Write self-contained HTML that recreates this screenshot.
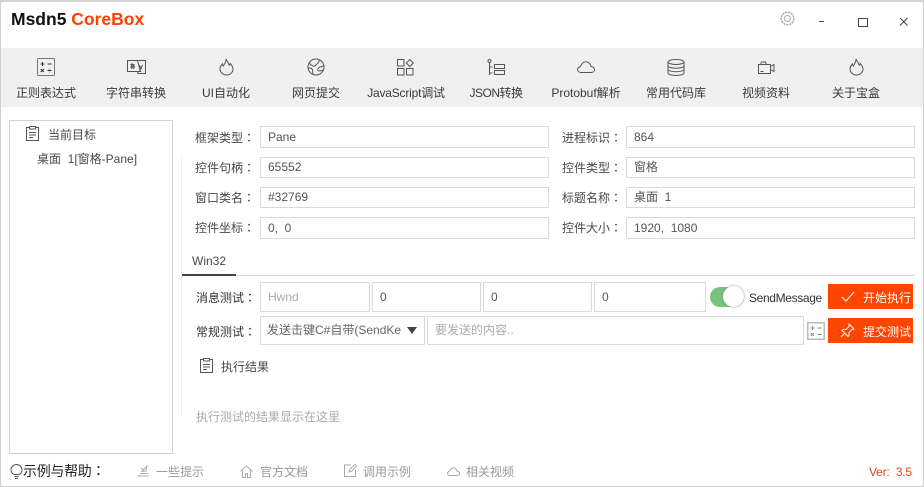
<!DOCTYPE html>
<html><head><meta charset="utf-8">
<style>
html,body{margin:0;padding:0;width:924px;height:487px;overflow:hidden;background:#fff}
body{position:relative;font-family:"Liberation Sans","Noto Sans CJK SC",sans-serif;font-size:12px;color:#444}
div,span,svg{position:absolute;box-sizing:border-box}
i{font-style:normal;font-family:"Noto Sans CJK TC",sans-serif}
.t{white-space:nowrap;line-height:16px}
.b{border:1px solid #dadada;background:#fff;padding-left:7px;line-height:20px;white-space:nowrap;color:#555}
.tb{top:85px;width:90px;text-align:center;white-space:nowrap;color:#3a3a3a;line-height:16px}
.l{white-space:nowrap;color:#4a4a4a;line-height:16px}
.g{white-space:nowrap;color:#999;line-height:16px}
svg{fill:none;stroke:#555;stroke-width:1}
</style></head><body>
<div style="left:0;top:0;width:924px;height:487px;border:1px solid #cfcfcf;border-top:2px solid #d4d4d4"></div>
<div class="t" style="left:11px;top:9px;font-size:17.5px;line-height:20px;font-weight:bold;color:#111">Msdn5 <span style="position:static;color:#ff4000">CoreBox</span></div>

<svg style="left:780px;top:11px" width="15" height="15" viewBox="0 0 15 15"><circle cx="7.500" cy="7.500" r="3" style="stroke:#aaa"/><circle cx="7.500" cy="7.500" r="6.300" style="stroke:#aaa;stroke-width:1.500;stroke-dasharray:2.200 .8"/></svg>
<div style="left:819px;top:21px;width:5px;height:1px;background:#444"></div>
<div style="left:858px;top:18px;width:10px;height:9px;border:1px solid #444"></div>
<svg style="left:899px;top:17px" width="10" height="10" viewBox="0 0 10 10"><path d="M1 1l7.500 7.500M8.500 1L1 8.500" style="stroke:#444"/></svg>

<div style="left:1px;top:48px;width:922px;height:59px;background:#f0f0f0"></div>

<svg style="left:37px;top:58px" width="18" height="18" viewBox="0 0 18 18"><rect x=".5" y=".5" width="17" height="17" rx="1" style="stroke:#777"/><path d="M3.500 6h4M5.500 4v4M10.500 6h4M3.800 11l3 3M6.800 11l-3 3M10.500 12.500h4M12.500 10.800v.6M12.500 13.800v.6" style="stroke:#333"/></svg>
<svg style="left:127px;top:59px" width="19" height="16" viewBox="0 0 19 16"><path d="M.5 1.500h10l3 11H.5zM8 1.500h10.500v13H11l-.5-2M3.500 5.500h4M5 4v6M7 6c-1 3-3 3.500-3 2s2-2.500 3-1 0 2-1 2.500M12 6l3 4M15.500 6l-3 6" /></svg>
<svg style="left:219px;top:58px" width="15" height="18" viewBox="0 0 15 18"><path d="M7 .8C7.500 3 9 4 9.500 5.500 10 7 10 7.500 10.500 7c.5-.5.5-1 .6-1.500C13 7.500 14 9.300 14 11c0 3.300-3 6-6.500 6S1 14.300 1 11c0-2 1-3.500 2.500-5 0 1 .3 1.600 1 2C5.500 5.500 7.500 3.500 7 .8z"/></svg>
<svg style="left:307px;top:58px" width="18" height="18" viewBox="0 0 18 18"><circle cx="9" cy="9" r="8"/><path d="M12.500 2c-1 2-1 3-2.500 4S8 9 6 8 2.500 6 2.500 5M1.500 10c2 0 3.500 0 4 2s0 3 .5 4M17 7.500c-2 2-4 .5-5.500 2.500s-.5 3 1 3 2.500-1 3.500-1"/></svg>
<svg style="left:397px;top:59px" width="17" height="17" viewBox="0 0 17 17"><rect x=".5" y=".5" width="6.500" height="6.500"/><rect x=".5" y="9.500" width="6.500" height="6.500"/><rect x="9.500" y="9.500" width="6.500" height="6.500"/><path d="M12.800.5l3.500 3.500-3.500 3.500L9.300 4z"/></svg>
<svg style="left:487px;top:59px" width="18" height="17" viewBox="0 0 18 17"><circle cx="2.500" cy="2" r="1.500"/><path d="M2.500 3.500V16M2.500 8h3M2.500 14h3"/><rect x="7.500" y="5.500" width="10" height="4"/><rect x="7.500" y="11.500" width="10" height="4"/></svg>
<svg style="left:577px;top:61px" width="18" height="12" viewBox="0 0 18 12"><path d="M4 11.500C2 11.500.5 10 .5 8.500S2 6 3.500 5.500C4.500 3 6.500.8 9 .8s4.500 2 5 4.700c2 .3 3.500 1.500 3.500 3.200s-1.500 2.800-3.500 2.800z"/></svg>
<svg style="left:667px;top:59px" width="18" height="17" viewBox="0 0 18 17"><ellipse cx="9" cy="3" rx="8" ry="2.500"/><path d="M1 3v11c0 1.400 3.600 2.500 8 2.500s8-1.100 8-2.500V3M1 6.700c0 1.400 3.600 2.500 8 2.500s8-1.100 8-2.500M1 10.300c0 1.400 3.600 2.500 8 2.500s8-1.100 8-2.500"/></svg>
<svg style="left:758px;top:61px" width="17" height="13" viewBox="0 0 17 13"><path d="M.5 3.500h12v9H.5zM2.500 3.500l1-2.500h4l1 2.500M2.500 10.500h3M12.500 5.500l3.500-2v7l-3.500-2"/></svg>
<svg style="left:849px;top:58px" width="15" height="18" viewBox="0 0 15 18"><path d="M7 .8C7.500 3 9 4 9.500 5.500 10 7 10 7.500 10.500 7c.5-.5.5-1 .6-1.500C13 7.500 14 9.300 14 11c0 3.300-3 6-6.500 6S1 14.300 1 11c0-2 1-3.500 2.500-5 0 1 .3 1.600 1 2C5.500 5.500 7.500 3.500 7 .8z"/></svg>

<div class="tb" style="left:1px">正则表达式</div>
<div class="tb" style="left:91px">字符串转换</div>
<div class="tb" style="left:181px">UI自动化</div>
<div class="tb" style="left:271px">网页提交</div>
<div class="tb" style="left:361px;letter-spacing:-.2px">JavaScript调试</div>
<div class="tb" style="left:451px;letter-spacing:-.5px">JSON转换</div>
<div class="tb" style="left:541px">Protobuf解析</div>
<div class="tb" style="left:631px">常用代码库</div>
<div class="tb" style="left:721px">视频资料</div>
<div class="tb" style="left:811px">关于宝盒</div>

<div style="left:9px;top:120px;width:164px;height:334px;border:1px solid #d2d2d2"></div>
<div style="left:181px;top:157px;width:1px;height:259px;background:#ececec"></div>
<svg style="left:26px;top:126px" width="13" height="15" viewBox="0 0 13 15"><path d="M3.500 1.500H.5v13h12v-13h-3M3.500.5h6v2.500h-6zM3 6.500h7M3 9h7M3 11.500h4"/></svg>
<div class="l" style="left:48px;top:127px">当前目标</div>
<div class="l" style="left:37px;top:151px">桌面&nbsp; 1[窗格-Pane]</div>

<div class="l" style="left:195px;top:130px">框架类型<i>：</i></div>
<div class="b" style="left:260px;top:126px;width:289px;height:22px">Pane</div>
<div class="l" style="left:195px;top:160px">控件句柄<i>：</i></div>
<div class="b" style="left:260px;top:157px;width:289px;height:21px;line-height:19px">65552</div>
<div class="l" style="left:195px;top:190px">窗口类名<i>：</i></div>
<div class="b" style="left:260px;top:187px;width:289px;height:21px;line-height:19px">#32769</div>
<div class="l" style="left:195px;top:220px">控件坐标<i>：</i></div>
<div class="b" style="left:260px;top:217px;width:289px;height:22px">0,&nbsp; 0</div>

<div class="l" style="left:562px;top:130px">进程标识<i>：</i></div>
<div class="b" style="left:626px;top:126px;width:289px;height:22px">864</div>
<div class="l" style="left:562px;top:160px">控件类型<i>：</i></div>
<div class="b" style="left:626px;top:157px;width:289px;height:21px;line-height:19px">窗格</div>
<div class="l" style="left:562px;top:190px">标题名称<i>：</i></div>
<div class="b" style="left:626px;top:187px;width:289px;height:21px;line-height:19px">桌面&nbsp; 1</div>
<div class="l" style="left:562px;top:220px">控件大小<i>：</i></div>
<div class="b" style="left:626px;top:217px;width:289px;height:22px">1920,&nbsp; 1080</div>

<div class="l" style="left:192px;top:253px">Win32</div>
<div style="left:182px;top:275px;width:733px;height:1px;background:#d8d8d8"></div>
<div style="left:182px;top:274px;width:54px;height:2px;background:#444"></div>

<div class="l" style="left:196px;top:290px;color:#333">消息测试<i>：</i></div>
<div class="b" style="left:260px;top:282px;width:110px;height:30px;line-height:28px;color:#aaa">Hwnd</div>
<div class="b" style="left:372px;top:282px;width:109px;height:30px;line-height:28px">0</div>
<div class="b" style="left:483px;top:282px;width:109px;height:30px;line-height:28px">0</div>
<div class="b" style="left:594px;top:282px;width:112px;height:30px;line-height:28px">0</div>

<div style="left:710px;top:287px;width:34px;height:20px;border-radius:10px;background:#79c27e"></div>
<div style="left:723px;top:286px;width:21px;height:21px;border-radius:50%;background:#fff;box-shadow:0 0 2px #888"></div>
<div class="l" style="left:749px;top:290px;color:#333;letter-spacing:-.35px">SendMessage</div>

<div style="left:828px;top:284px;width:85px;height:25px;background:#ff4500"></div>
<svg style="left:841px;top:291px" width="14" height="11" viewBox="0 0 14 11"><path d="M1 6l4 4 8-9" style="stroke:#fff"/></svg>
<div class="t" style="left:863px;top:290px;color:#fff">开始执行</div>

<div class="l" style="left:196px;top:324px;color:#333">常规测试<i>：</i></div>
<div class="b" style="left:260px;top:316px;width:165px;height:29px;line-height:27px;padding-left:6px;color:#666;overflow:hidden"><span style="position:static;display:inline-block;width:134px;overflow:hidden;vertical-align:top">发送击键C#自带(SendKeys)</span></div>
<div style="left:407px;top:327px;width:0;height:0;border-left:5px solid transparent;border-right:5px solid transparent;border-top:7px solid #444"></div>
<div class="b" style="left:427px;top:316px;width:377px;height:29px;line-height:27px;color:#aaa">要发送的内容..</div>
<svg style="left:807px;top:322px" width="18" height="18" viewBox="0 0 18 18"><rect x=".75" y=".75" width="16.500" height="16.500" style="stroke:#bbb;stroke-width:1.500"/><path d="M3.500 6h4M5.500 4v4M10.500 6h4M3.800 11l3 3M6.800 11l-3 3M10.500 12.500h4" style="stroke:#888"/></svg>
<div style="left:828px;top:318px;width:85px;height:25px;background:#ff4500"></div>
<svg style="left:840px;top:323px" width="15" height="15" viewBox="0 0 15 15"><path d="M9 1l5 5-2 .5-3 3 0 3-1 1-6-6 1-1 3 0 3-3zM4.500 10.500L1 14" style="stroke:#fff"/></svg>
<div class="t" style="left:863px;top:324px;color:#fff">提交测试</div>

<svg style="left:200px;top:358px" width="13" height="15" viewBox="0 0 13 15"><path d="M3.500 1.500H.5v13h12v-13h-3M3.500.5h6v2.500h-6zM3 6.500h7M3 9h7M3 11.500h4"/></svg>
<div class="l" style="left:221px;top:359px">执行结果</div>
<div class="g" style="left:196px;top:409px;color:#aaa">执行测试的结果显示在这里</div>

<svg style="left:10px;top:464px" width="13" height="15" viewBox="0 0 13 15"><path d="M4 10.500C2 9.500 1 8 1 6a5.500 5.500 0 0 1 11 0c0 2-1 3.500-3 4.500zM4.500 12.500h4M5 14.500h3"/></svg>
<div class="t" style="left:23px;top:463px;font-size:14px;color:#222;letter-spacing:-.3px">示例与帮助<i>：</i></div>
<svg style="left:137px;top:465px" width="13" height="12" viewBox="0 0 13 12"><path d="M1 11h11M3 8.500h8M5 6.500l5-5.500-1 5zM4 3.500L7 5" style="stroke:#aaa"/></svg>
<div class="g" style="left:156px;top:464px">一些提示</div>
<svg style="left:240px;top:465px" width="13" height="13" viewBox="0 0 13 13"><path d="M.5 6.500L6.500 1l6 5.500M2.500 5.500v7h3v-4h2v4h3v-7" style="stroke:#aaa"/></svg>
<div class="g" style="left:260px;top:464px">官方文档</div>
<svg style="left:344px;top:464px" width="13" height="13" viewBox="0 0 13 13"><path d="M7 1H.5v11.500h11V6M5 8l1-3 5-4.500 1.500 1.500L8 7z" style="stroke:#aaa"/></svg>
<div class="g" style="left:363px;top:464px">调用示例</div>
<svg style="left:447px;top:467px" width="13" height="9" viewBox="0 0 13 9"><path d="M3 8.500C1.500 8.500.5 7.500.5 6.500S1.500 4.500 2.500 4C3.500 2 5 .7 6.500.7S9.500 2 10 4c1.500.3 2.500 1 2.500 2.300S11.500 8.500 10 8.500z" style="stroke:#aaa"/></svg>
<div class="g" style="left:466px;top:464px">相关视频</div>
<div class="t" style="left:869px;top:464px;color:#e8431a;letter-spacing:-.2px">Ver:&nbsp; 3.5</div>
</body></html>
